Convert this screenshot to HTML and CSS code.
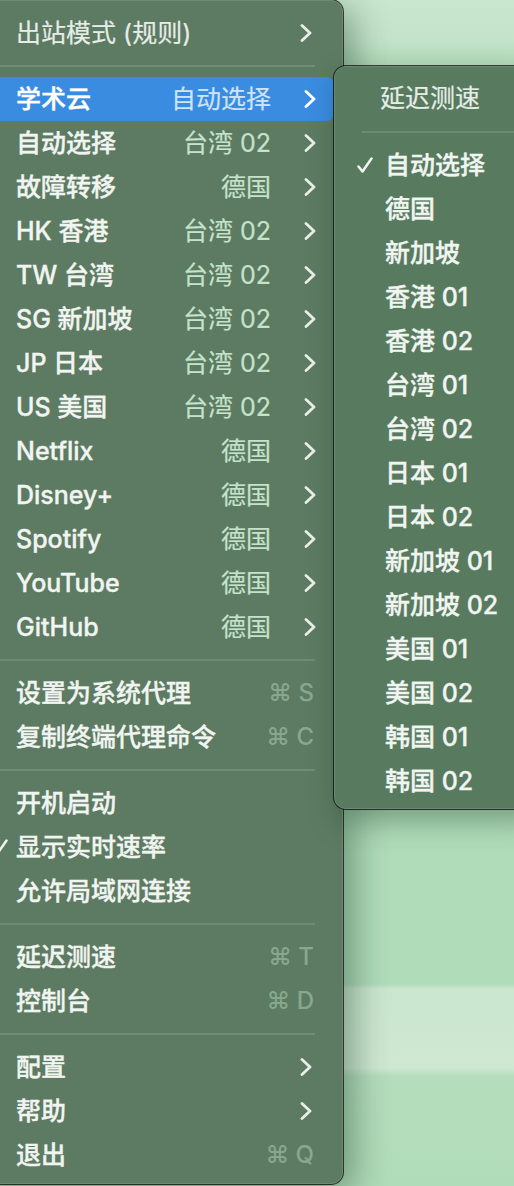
FILE: index.html
```html
<!DOCTYPE html>
<html lang="zh-CN">
<head>
<meta charset="utf-8">
<title>Menu</title>
<link rel="stylesheet" href="styles.css">
</head>
<body>
<div class="desktop">
  <div class="menu main">
    <div class="item"><span class="check"></span><span class="label soft">出站模式 (规则)</span><svg class="chev alt" viewBox="0 0 12 18" width="12" height="18"><path d="M2 1.5 L10 9 L2 16.5"/></svg></div>
    <div class="sep"></div>
    <div class="item active"><span class="check"></span><span class="label">学术云</span><span class="value">自动选择</span><svg class="chev" viewBox="0 0 12 18" width="12" height="18"><path d="M2 1.5 L10 9 L2 16.5"/></svg></div>
    <div class="item"><span class="check"></span><span class="label">自动选择</span><span class="value">台湾 02</span><svg class="chev" viewBox="0 0 12 18" width="12" height="18"><path d="M2 1.5 L10 9 L2 16.5"/></svg></div>
    <div class="item"><span class="check"></span><span class="label">故障转移</span><span class="value">德国</span><svg class="chev" viewBox="0 0 12 18" width="12" height="18"><path d="M2 1.5 L10 9 L2 16.5"/></svg></div>
    <div class="item"><span class="check"></span><span class="label">HK 香港</span><span class="value">台湾 02</span><svg class="chev" viewBox="0 0 12 18" width="12" height="18"><path d="M2 1.5 L10 9 L2 16.5"/></svg></div>
    <div class="item"><span class="check"></span><span class="label">TW 台湾</span><span class="value">台湾 02</span><svg class="chev" viewBox="0 0 12 18" width="12" height="18"><path d="M2 1.5 L10 9 L2 16.5"/></svg></div>
    <div class="item"><span class="check"></span><span class="label">SG 新加坡</span><span class="value">台湾 02</span><svg class="chev" viewBox="0 0 12 18" width="12" height="18"><path d="M2 1.5 L10 9 L2 16.5"/></svg></div>
    <div class="item"><span class="check"></span><span class="label">JP 日本</span><span class="value">台湾 02</span><svg class="chev" viewBox="0 0 12 18" width="12" height="18"><path d="M2 1.5 L10 9 L2 16.5"/></svg></div>
    <div class="item"><span class="check"></span><span class="label">US 美国</span><span class="value">台湾 02</span><svg class="chev" viewBox="0 0 12 18" width="12" height="18"><path d="M2 1.5 L10 9 L2 16.5"/></svg></div>
    <div class="item"><span class="check"></span><span class="label">Netflix</span><span class="value">德国</span><svg class="chev" viewBox="0 0 12 18" width="12" height="18"><path d="M2 1.5 L10 9 L2 16.5"/></svg></div>
    <div class="item"><span class="check"></span><span class="label">Disney+</span><span class="value">德国</span><svg class="chev" viewBox="0 0 12 18" width="12" height="18"><path d="M2 1.5 L10 9 L2 16.5"/></svg></div>
    <div class="item"><span class="check"></span><span class="label">Spotify</span><span class="value">德国</span><svg class="chev" viewBox="0 0 12 18" width="12" height="18"><path d="M2 1.5 L10 9 L2 16.5"/></svg></div>
    <div class="item"><span class="check"></span><span class="label">YouTube</span><span class="value">德国</span><svg class="chev" viewBox="0 0 12 18" width="12" height="18"><path d="M2 1.5 L10 9 L2 16.5"/></svg></div>
    <div class="item"><span class="check"></span><span class="label">GitHub</span><span class="value">德国</span><svg class="chev" viewBox="0 0 12 18" width="12" height="18"><path d="M2 1.5 L10 9 L2 16.5"/></svg></div>
    <div class="sep"></div>
    <div class="item"><span class="check"></span><span class="label">设置为系统代理</span><span class="key">⌘ S</span></div>
    <div class="item"><span class="check"></span><span class="label">复制终端代理命令</span><span class="key">⌘ C</span></div>
    <div class="sep"></div>
    <div class="item"><span class="check"></span><span class="label">开机启动</span></div>
    <div class="item"><span class="check"><svg viewBox="0 0 16 16" width="16" height="16"><path d="M1.5 9.5 L5.5 14.5 L14.5 1.5"/></svg></span><span class="label">显示实时速率</span></div>
    <div class="item"><span class="check"></span><span class="label">允许局域网连接</span></div>
    <div class="sep"></div>
    <div class="item"><span class="check"></span><span class="label">延迟测速</span><span class="key">⌘ T</span></div>
    <div class="item"><span class="check"></span><span class="label">控制台</span><span class="key">⌘ D</span></div>
    <div class="sep"></div>
    <div class="item"><span class="check"></span><span class="label">配置</span><svg class="chev alt" viewBox="0 0 12 18" width="12" height="18"><path d="M2 1.5 L10 9 L2 16.5"/></svg></div>
    <div class="item"><span class="check"></span><span class="label">帮助</span><svg class="chev alt" viewBox="0 0 12 18" width="12" height="18"><path d="M2 1.5 L10 9 L2 16.5"/></svg></div>
    <div class="item"><span class="check"></span><span class="label">退出</span><span class="key">⌘ Q</span></div>
  </div>

  <div class="menu submenu">
    <div class="item header"><span class="label soft">延迟测速</span></div>
    <div class="sep"></div>
    <div class="item"><span class="check"><svg viewBox="0 0 16 16" width="16" height="16"><path d="M1.5 9.5 L5.5 14.5 L14.5 1.5"/></svg></span><span class="label">自动选择</span></div>
    <div class="item"><span class="check"></span><span class="label">德国</span></div>
    <div class="item"><span class="check"></span><span class="label">新加坡</span></div>
    <div class="item"><span class="check"></span><span class="label">香港 01</span></div>
    <div class="item"><span class="check"></span><span class="label">香港 02</span></div>
    <div class="item"><span class="check"></span><span class="label">台湾 01</span></div>
    <div class="item"><span class="check"></span><span class="label">台湾 02</span></div>
    <div class="item"><span class="check"></span><span class="label">日本 01</span></div>
    <div class="item"><span class="check"></span><span class="label">日本 02</span></div>
    <div class="item"><span class="check"></span><span class="label">新加坡 01</span></div>
    <div class="item"><span class="check"></span><span class="label">新加坡 02</span></div>
    <div class="item"><span class="check"></span><span class="label">美国 01</span></div>
    <div class="item"><span class="check"></span><span class="label">美国 02</span></div>
    <div class="item"><span class="check"></span><span class="label">韩国 01</span></div>
    <div class="item"><span class="check"></span><span class="label">韩国 02</span></div>
  </div>
</div>
</body>
</html>
```

FILE: styles.css
```css
html, body {
  margin: 0;
  padding: 0;
}

body {
  width: 514px;
  height: 1186px;
  overflow: hidden;
  font-family: Inter, "Noto Sans CJK SC", "DejaVu Sans", sans-serif;
  background: linear-gradient(to bottom,
    #c9e6ce 0px, #c4e3ca 40px, #b4dcbc 62px, #b1dcba 120px,
    #b1dcba 984px, #cbe6cf 989px, #cee8d2 1068px, #b5ddbd 1076px, #b1dcba 1186px);
}

.desktop {
  position: relative;
  width: 514px;
  height: 1186px;
  overflow: hidden;
}

.menu {
  position: absolute;
  box-sizing: border-box;
  display: flex;
  flex-direction: column;
  border-radius: 12px;
}

.main {
  left: -28px;
  top: 0;
  width: 371px;
  height: 1184px;
  padding: 11px 10px 7px;
  background: #5d7a62;
  box-shadow:
    inset 0 0 0 1px rgba(255, 255, 255, 0.12),
    0 0 0 1px rgba(0, 0, 0, 0.7),
    10px 10px 36px rgba(0, 40, 20, 0.4);
}

.submenu {
  left: 334px;
  top: 66px;
  width: 200px;
  padding: 10px 10px 6px;
  background: #587a5f;
  box-shadow:
    inset 0 0 0 1px rgba(255, 255, 255, 0.12),
    0 0 0 1px rgba(0, 0, 0, 0.7),
    6px 12px 30px rgba(0, 40, 20, 0.35);
}

.item {
  display: flex;
  align-items: center;
  height: 44px;
  flex: none;
  padding: 0 17px 0 10px;
  border-radius: 6px;
  font-size: 25px;
  line-height: 44px;
  color: #f1f5f1;
  white-space: nowrap;
}

.check {
  flex: none;
  width: 24px;
  height: 44px;
  display: flex;
  align-items: center;
}

.check svg {
  display: block;
  fill: none;
  stroke: currentColor;
  stroke-width: 2.5;
  stroke-linecap: round;
  stroke-linejoin: round;
}

.label {
  flex: 1;
  font-weight: 500;
  -webkit-text-stroke: 0.35px currentColor;
}

.label.soft {
  font-weight: 400;
  color: #e6ede7;
  -webkit-text-stroke: 0.2px currentColor;
}

.value {
  flex: none;
  margin-right: 33px;
  color: #c5e3cb;
  font-weight: 400;
  -webkit-text-stroke: 0.2px currentColor;
}

.chev {
  flex: none;
  display: block;
  fill: none;
  stroke: #e8eee9;
  stroke-width: 2.8;
  stroke-linecap: round;
  stroke-linejoin: round;
}

.chev.alt {
  margin-right: 4px;
}

.key {
  flex: none;
  margin-right: 2px;
  color: #87a88e;
  font-weight: 500;
  font-size: 24px;
}

.active {
  background: #3a8ce1;
  color: #ffffff;
}

.active .value {
  color: #cfe3f7;
}

.active .chev {
  stroke: #ffffff;
}

.sep {
  flex: none;
  height: 22px;
  display: flex;
  align-items: center;
  margin: 0 18px 0 10px;
}

.sep::before {
  content: "";
  display: block;
  width: 100%;
  height: 2px;
  background: rgba(255, 255, 255, 0.13);
}

.submenu .item {
  padding-left: 13px;
}

.submenu .check {
  width: 28px;
}

.submenu .header {
  padding-left: 36px;
}

.submenu .sep {
  margin: 1px 0 0 18px;
}
```
